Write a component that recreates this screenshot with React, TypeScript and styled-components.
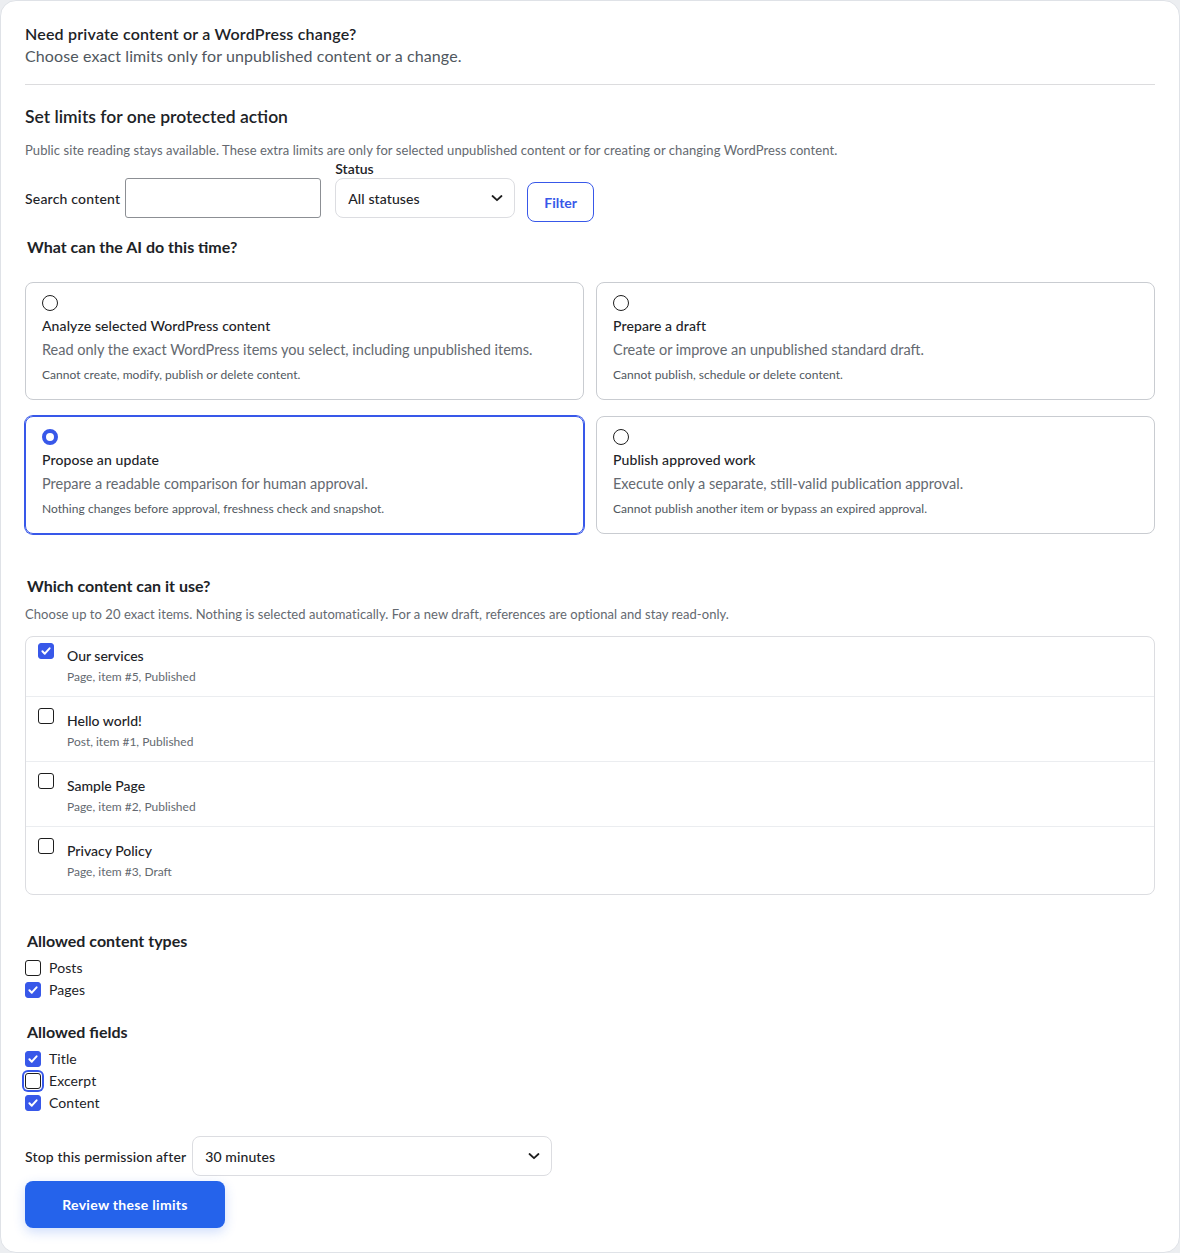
import React from "react";
import styled, { createGlobalStyle, css } from "styled-components";

const Global = createGlobalStyle`
  * { box-sizing: border-box; }
  html, body { margin: 0; padding: 0; }
  body {
    background: #eceef1;
    font-family: Lato, "Noto Sans", "Liberation Sans", sans-serif;
    color: #1d2327;
  }
`;

const BLUE = "#3858e9";

const Card = styled.main`
  background: #fff;
  border: 1px solid #dfe2e7;
  border-radius: 16px;
  padding: 22px 24px 24px;
  min-height: 1252px;
`;

const Header = styled.header`
  padding-bottom: 17px;
  border-bottom: 1px solid #dcdcde;
`;

const Title = styled.h2`
  margin: 0;
  font-size: 16px;
  line-height: 22px;
  font-weight: 600;
  letter-spacing: 0.2px;
  color: #1d2327;
`;

const Subtitle = styled.p`
  margin: 0;
  font-size: 16px;
  line-height: 22px;
  letter-spacing: 0.1px;
  color: #50575e;
`;

const SectionTitle = styled.h3`
  margin: 20px 0 0;
  font-size: 17.5px;
  line-height: 24px;
  font-weight: 600;
`;

const Intro = styled.p`
  margin: 12px 0 0;
  font-size: 13px;
  line-height: 18px;
  letter-spacing: 0.07px;
  color: #646970;
`;

const FilterRow = styled.div`
  display: flex;
  align-items: flex-start;
  margin-top: 1px;
`;

const SearchGroup = styled.label`
  display: flex;
  align-items: center;
  gap: 5px;
  padding-top: 18px;
  font-size: 14px;
  letter-spacing: 0.2px;
  font-weight: 500;
`;

const TextInput = styled.input`
  width: 196px;
  height: 40px;
  border: 1px solid #8c8f94;
  border-radius: 3px;
  padding: 0 10px;
  font: inherit;
`;

const StatusGroup = styled.div`
  display: flex;
  flex-direction: column;
  margin-left: 14px;
`;

const SmallLabel = styled.span`
  font-size: 14px;
  line-height: 18px;
  font-weight: 600;
`;

const SelectBox = styled.div<{ $w: number }>`
  width: ${(p) => p.$w}px;
  height: 40px;
  border: 1px solid #dcdde1;
  border-radius: 8px;
  display: flex;
  align-items: center;
  justify-content: space-between;
  padding: 0 11px 0 12px;
  font-size: 14px;
  font-weight: 500;
  letter-spacing: 0.1px;
  color: #1d2327;
  background: #fff;
`;

const FilterButton = styled.button`
  margin: 22px 0 -4px 12px;
  height: 40px;
  padding: 0 16px;
  border: 1px solid ${BLUE};
  border-radius: 8px;
  background: #fff;
  color: ${BLUE};
  font: inherit;
  font-size: 14px;
  font-weight: 700;
`;

const Legend = styled.h4<{ $top: number }>`
  margin: ${(p) => p.$top}px 0 0;
  padding-left: 2px;
  font-size: 16px;
  line-height: 22px;
  font-weight: 700;
`;

const OptionGrid = styled.div`
  display: grid;
  grid-template-columns: 1fr 1fr;
  column-gap: 12px;
  row-gap: 16px;
  margin-top: 24px;
`;

const OptionCard = styled.label<{ $selected?: boolean }>`
  display: block;
  border: 1px solid #c9ccd1;
  border-radius: 8px;
  padding: 12px 16px 16px;
  ${(p) =>
    p.$selected &&
    css`
      border-color: ${BLUE};
      box-shadow: 0 0 0 1px ${BLUE};
    `}
`;

const Radio = styled.span<{ $checked?: boolean }>`
  display: block;
  width: 16px;
  height: 16px;
  border-radius: 50%;
  border: 1px solid #1e1e1e;
  margin-bottom: 5px;
  ${(p) =>
    p.$checked &&
    css`
      border: 4px solid ${BLUE};
    `}
`;

const OptionTitle = styled.div`
  font-size: 14px;
  line-height: 20px;
  font-weight: 500;
  letter-spacing: 0.1px;
`;

const OptionDesc = styled.div`
  margin-top: 4px;
  font-size: 14.5px;
  line-height: 20px;
  color: #646970;
`;

const OptionNote = styled.div`
  margin-top: 7px;
  font-size: 12px;
  line-height: 16px;
  letter-spacing: 0.05px;
  color: #50575e;
`;

const ListDesc = styled.p`
  margin: 8px 0 0;
  font-size: 13px;
  line-height: 18px;
  letter-spacing: 0.05px;
  color: #646970;
`;

const ItemList = styled.ul`
  list-style: none;
  margin: 13px 0 0;
  padding: 0;
  border: 1px solid #dcdde1;
  border-radius: 8px;
`;

const ItemRow = styled.li`
  display: flex;
  align-items: flex-start;
  gap: 13px;
  padding: 11px 12px 11px;
  & + & {
    border-top: 1px solid #ebedf0;
  }
  &:first-child {
    padding-top: 6px;
  }
  &:last-child {
    padding-bottom: 14px;
  }
`;

const Box = styled.span<{ $checked?: boolean; $focus?: boolean }>`
  flex: none;
  width: 16px;
  height: 16px;
  border-radius: 3px;
  border: 1px solid #1e1e1e;
  background: #fff;
  display: flex;
  align-items: center;
  justify-content: center;
  ${(p) =>
    p.$checked &&
    css`
      border-color: ${BLUE};
      background: ${BLUE};
    `}
  ${(p) =>
    p.$focus &&
    css`
      box-shadow: 0 0 0 1px #fff, 0 0 0 3px ${BLUE};
    `}
`;

const ItemText = styled.div`
  padding-top: 3px;
  display: flex;
  flex-direction: column;
  gap: 3px;
`;

const ItemTitle = styled.span`
  font-size: 14px;
  line-height: 20px;
  font-weight: 500;
`;

const ItemMeta = styled.span`
  font-size: 12px;
  line-height: 16px;
  color: #646970;
`;

const CheckGroup = styled.div<{ $gap: number }>`
  margin-top: 8px;
  display: flex;
  flex-direction: column;
  gap: ${(p) => p.$gap}px;
`;

const CheckLine = styled.label`
  display: flex;
  align-items: center;
  gap: 8px;
  font-size: 14px;
  line-height: 16px;
  letter-spacing: 0.1px;
`;

const StopRow = styled.div`
  display: flex;
  align-items: center;
  gap: 6px;
  margin-top: 25px;
  font-size: 14px;
  letter-spacing: 0.15px;
  font-weight: 500;
`;

const PrimaryButton = styled.button`
  margin-top: 5px;
  width: 200px;
  height: 47px;
  border: 0;
  border-radius: 8px;
  background: #2563eb;
  color: #fff;
  font: inherit;
  font-size: 14px;
  font-weight: 700;
  letter-spacing: 0.3px;
  box-shadow: 0 4px 12px rgba(37, 99, 235, 0.22);
`;

const Chevron = () => (
  <svg width="12" height="12" viewBox="0 0 12 12" fill="none">
    <path d="M1.5 4l4.5 4.2L10.5 4" stroke="#1e1e1e" strokeWidth="1.8" strokeLinecap="round" strokeLinejoin="round" />
  </svg>
);

const Tick = () => (
  <svg width="12" height="12" viewBox="0 0 12 12" fill="none">
    <path d="M2.4 6.3l2.4 2.4 4.8-5.4" stroke="#fff" strokeWidth="2" strokeLinecap="round" strokeLinejoin="round" />
  </svg>
);

const Check = ({ checked, focus }: { checked?: boolean; focus?: boolean }) => (
  <Box $checked={checked} $focus={focus}>{checked && <Tick />}</Box>
);

const options = [
  {
    title: "Analyze selected WordPress content",
    desc: "Read only the exact WordPress items you select, including unpublished items.",
    note: "Cannot create, modify, publish or delete content.",
  },
  {
    title: "Prepare a draft",
    desc: "Create or improve an unpublished standard draft.",
    note: "Cannot publish, schedule or delete content.",
  },
  {
    title: "Propose an update",
    desc: "Prepare a readable comparison for human approval.",
    note: "Nothing changes before approval, freshness check and snapshot.",
    selected: true,
  },
  {
    title: "Publish approved work",
    desc: "Execute only a separate, still-valid publication approval.",
    note: "Cannot publish another item or bypass an expired approval.",
  },
];

const items = [
  { title: "Our services", meta: "Page, item #5, Published", checked: true },
  { title: "Hello world!", meta: "Post, item #1, Published" },
  { title: "Sample Page", meta: "Page, item #2, Published" },
  { title: "Privacy Policy", meta: "Page, item #3, Draft" },
];

export default function App() {
  return (
    <>
      <Global />
      <Card>
        <Header>
          <Title>Need private content or a WordPress change?</Title>
          <Subtitle>Choose exact limits only for unpublished content or a change.</Subtitle>
        </Header>

        <SectionTitle>Set limits for one protected action</SectionTitle>
        <Intro>
          Public site reading stays available. These extra limits are only for selected unpublished content or for
          creating or changing WordPress content.
        </Intro>

        <FilterRow>
          <SearchGroup>
            Search content
            <TextInput type="text" />
          </SearchGroup>
          <StatusGroup>
            <SmallLabel>Status</SmallLabel>
            <SelectBox $w={180}>
              All statuses
              <Chevron />
            </SelectBox>
          </StatusGroup>
          <FilterButton>Filter</FilterButton>
        </FilterRow>

        <Legend $top={18}>What can the AI do this time?</Legend>
        <OptionGrid>
          {options.map((o) => (
            <OptionCard key={o.title} $selected={o.selected}>
              <Radio $checked={o.selected} />
              <OptionTitle>{o.title}</OptionTitle>
              <OptionDesc>{o.desc}</OptionDesc>
              <OptionNote>{o.note}</OptionNote>
            </OptionCard>
          ))}
        </OptionGrid>

        <Legend $top={41}>Which content can it use?</Legend>
        <ListDesc>
          Choose up to 20 exact items. Nothing is selected automatically. For a new draft, references are optional and
          stay read-only.
        </ListDesc>
        <ItemList>
          {items.map((it) => (
            <ItemRow key={it.title}>
              <Check checked={it.checked} />
              <ItemText>
                <ItemTitle>{it.title}</ItemTitle>
                <ItemMeta>{it.meta}</ItemMeta>
              </ItemText>
            </ItemRow>
          ))}
        </ItemList>

        <Legend $top={35}>Allowed content types</Legend>
        <CheckGroup $gap={6}>
          <CheckLine>
            <Check /> Posts
          </CheckLine>
          <CheckLine>
            <Check checked /> Pages
          </CheckLine>
        </CheckGroup>

        <Legend $top={23}>Allowed fields</Legend>
        <CheckGroup $gap={6}>
          <CheckLine>
            <Check checked /> Title
          </CheckLine>
          <CheckLine>
            <Check focus /> Excerpt
          </CheckLine>
          <CheckLine>
            <Check checked /> Content
          </CheckLine>
        </CheckGroup>

        <StopRow>
          Stop this permission after
          <SelectBox $w={360}>
            30 minutes
            <Chevron />
          </SelectBox>
        </StopRow>
        <PrimaryButton>Review these limits</PrimaryButton>
      </Card>
    </>
  );
}
